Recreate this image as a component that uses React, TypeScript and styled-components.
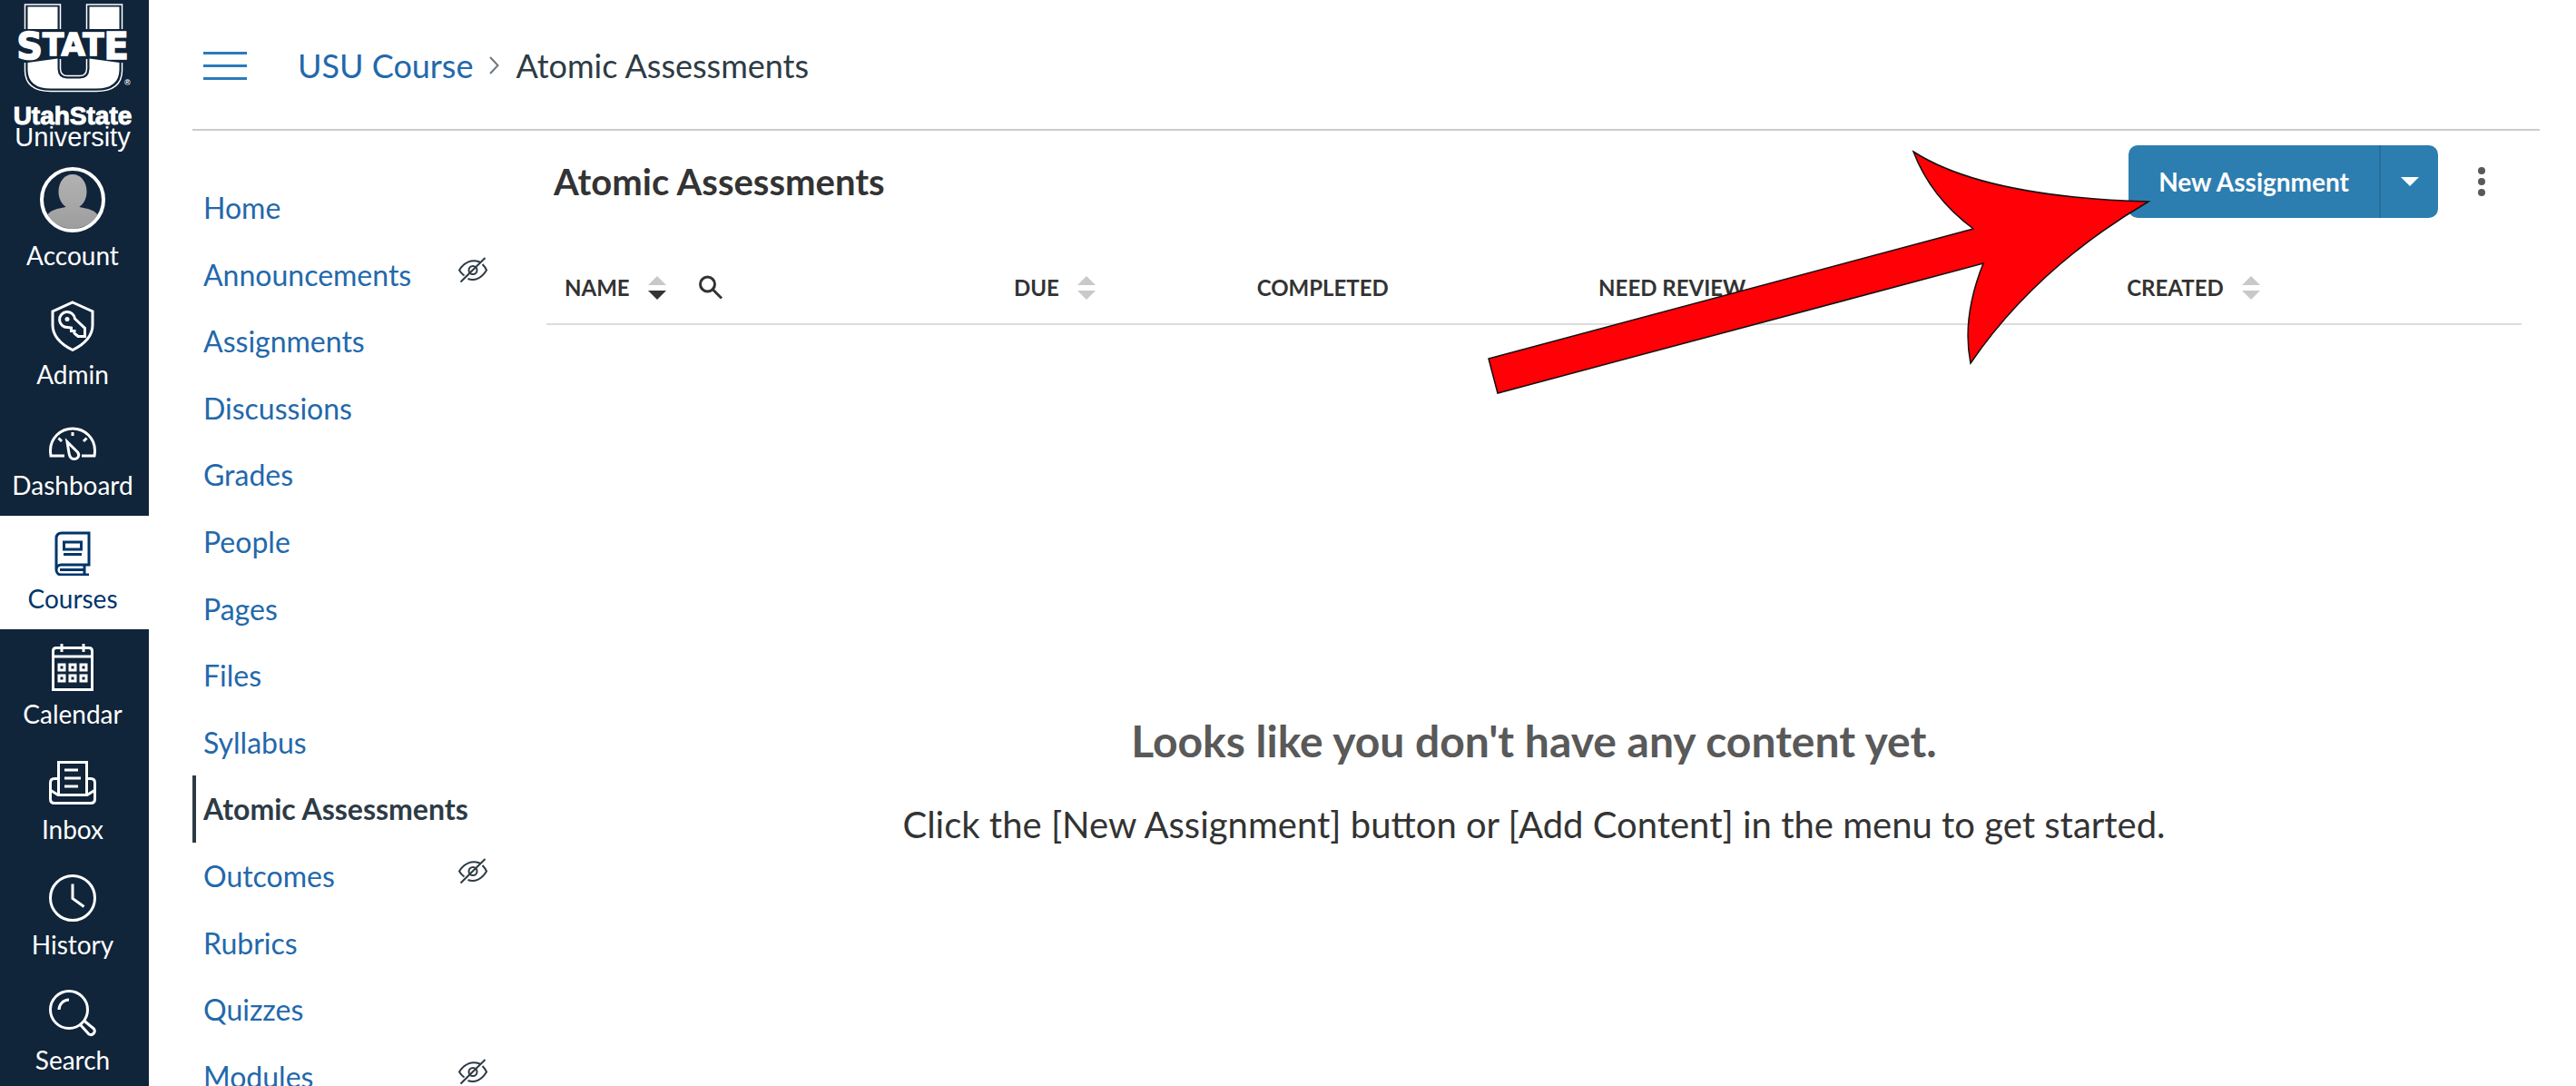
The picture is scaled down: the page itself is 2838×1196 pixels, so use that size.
import React from 'react';
import styled, { createGlobalStyle } from 'styled-components';

const GlobalStyle = createGlobalStyle`
  * { box-sizing: border-box; }
  body {
    margin: 0;
    background: #fff;
    color: #2d3b45;
    font-family: Lato, "Liberation Sans", sans-serif;
  }
  a { text-decoration: none; }
  button { font-family: inherit; }
`;

const Shell = styled.div`
  position: relative;
  display: flex;
  height: 100vh;
  overflow: hidden;
`;

/* ---------- global navigation ---------- */

const Sidebar = styled.nav`
  flex: 0 0 164px;
  display: flex;
  flex-direction: column;
  background: #10243a;
  overflow: hidden;
`;

const LogoLink = styled.a`
  flex: none;
  display: block;

  svg { display: block; }
`;

const GlobalItem = styled.a<{ $active?: boolean }>`
  flex: none;
  display: flex;
  flex-direction: column;
  align-items: center;
  gap: 8px;
  padding: 16px 4px 17px 0;
  font-size: 28px;
  line-height: 34px;
  color: ${(p) => (p.$active ? '#00356b' : '#fff')};
  background: ${(p) => (p.$active ? '#fff' : 'transparent')};

  svg {
    display: block;
    flex: none;
  }
`;

const Glyph = styled.svg`
  fill: none;
  stroke: currentColor;
  stroke-width: 3;
`;

/* ---------- page ---------- */

const Page = styled.div`
  flex: 1;
  min-width: 0;
  display: flex;
  flex-direction: column;
  padding: 0 40px 0 48px;
`;

const TopBar = styled.header`
  display: flex;
  align-items: center;
  gap: 56px;
  height: 144px;
  padding: 2px 0 0 12px;
  border-bottom: 2px solid #c7cdd1;
`;

const MenuButton = styled.button`
  display: grid;
  gap: 11px;
  width: 48px;
  padding: 0;
  border: 0;
  background: none;
  cursor: pointer;
`;

const MenuLine = styled.span`
  height: 3px;
  background: #2b7abc;
`;

const Crumbs = styled.nav`
  display: flex;
  align-items: center;
  gap: 18px;
  font-size: 36px;
  line-height: 44px;
  color: #2d3b45;

  a { color: #2368ab; }
`;

const Columns = styled.div`
  display: flex;
  flex: 1;
  min-height: 0;
`;

const CourseNav = styled.ul`
  flex: 0 0 390px;
  margin: 0;
  padding: 48px 65px 0 0;
  list-style: none;
`;

const CourseLink = styled.a<{ $active?: boolean }>`
  display: flex;
  justify-content: space-between;
  padding: 16px 0 16px 8px;
  border-left: 4px solid ${(p) => (p.$active ? '#2d3b45' : 'transparent')};
  font-size: 32px;
  line-height: 1.3;
  font-weight: ${(p) => (p.$active ? 700 : 400)};
  color: ${(p) => (p.$active ? '#2d3b45' : '#2368ab')};
  white-space: nowrap;

  svg {
    color: #2d3b45;
    stroke-width: 2;
  }
`;

const Main = styled.main`
  flex: 1;
  min-width: 0;
  padding: 16px 20px 0 0;
`;

const TitleRow = styled.div`
  display: flex;
  align-items: center;
  padding: 0 32px 0 8px;
`;

const Title = styled.h1`
  flex: 1;
  margin: 0;
  font-size: 40px;
  line-height: 48px;
  color: #333;
`;

const SplitButton = styled.div`
  display: flex;
  height: 80px;
  border-radius: 10px;
  overflow: hidden;
`;

const PrimaryButton = styled.button`
  padding: 0 33px;
  border: 0;
  background: #2d7eb0;
  color: #fff;
  font-size: 28px;
  line-height: 34px;
  font-weight: 700;
  cursor: pointer;
`;

const CaretButton = styled(PrimaryButton)`
  display: grid;
  place-items: center;
  width: 65px;
  padding: 0;
  border-left: 2px solid #276e9a;
`;

const KebabButton = styled.button`
  display: grid;
  justify-items: center;
  gap: 4px;
  width: 24px;
  margin-left: 36px;
  padding: 0;
  border: 0;
  background: none;
  cursor: pointer;
`;

const Dot = styled.span`
  width: 8px;
  height: 8px;
  border-radius: 50%;
  background: #595959;
`;

const ContentTable = styled.table`
  width: 100%;
  margin-top: 37px;
  border-collapse: collapse;
  table-layout: fixed;
  border-bottom: 2px solid #dcdcdc;
`;

const HeadCell = styled.th<{ $share: number }>`
  width: ${(p) => p.$share}%;
  height: 80px;
  padding: 0 20px;
  text-align: left;
  font-size: 24px;
  line-height: 30px;
  font-weight: 700;
  color: #333;
`;

const HeadContent = styled.div`
  display: flex;
  align-items: center;
  gap: 20px;
`;

const IconButton = styled.button`
  display: flex;
  padding: 0;
  border: 0;
  background: none;
  cursor: pointer;
`;

const SearchToggle = styled(IconButton)`
  margin-left: 16px;
`;

const Empty = styled.section`
  padding-top: 428px;
  text-align: center;
`;

const EmptyTitle = styled.h2`
  margin: 0;
  font-size: 48px;
  line-height: 60px;
  color: #595959;
`;

const EmptyText = styled.p`
  margin: 32px 0 0;
  font-size: 40px;
  line-height: 60px;
  color: #333;
`;

const Arrow = styled.svg`
  position: absolute;
  top: 160px;
  right: 468px;
  pointer-events: none;
`;

/* ---------- drawings ---------- */

const Logo = () => (
  <svg width="164" height="168" viewBox="0 0 164 168" fill="#fff">
    <path d="M27.500 32V5H66.500V32M95.500 32V5H134.500V32" fill="none" stroke="#fff" strokeWidth="1.500" />
    <path d="M30.500 7.500H63.500V32H30.500zM98.500 7.500H131.500V32H98.500z" />
    <path d="M27.500 69V78Q28 100.500 56 100.500H106Q134 100.500 134.500 78V69" fill="none" stroke="#fff" strokeWidth="1.500" />
    <path d="M30.500 69L63.500 64.500V76Q64 86.500 74 86.500H88Q98 86.500 98.500 76V64.500L131.500 69V77Q131 97.500 106 97.500H56Q31 97.500 30.500 77z" />
    <path d="M66.500 65V76Q67 83.500 74 83.500H88Q95 83.500 95.500 76V65" fill="none" stroke="#fff" strokeWidth="1.500" />
    <text x="80" y="65" textAnchor="middle" fontFamily="DejaVu Sans" fontWeight="700" fontSize="34" stroke="#fff" strokeWidth="1.500">
      <tspan fontSize="40">S</tspan>
      <tspan dy="-4">TAT</tspan>
      <tspan dy="4" fontSize="40">E</tspan>
    </text>
    <text x="137" y="94" fontFamily="Liberation Sans" fontWeight="700" fontSize="9">®</text>
    <text x="80" y="137" textAnchor="middle" fontFamily="Liberation Sans" fontWeight="700" fontSize="28" stroke="#fff" strokeWidth="1">UtahState</text>
    <text x="80" y="161" textAnchor="middle" fontFamily="Liberation Sans" fontSize="29">University</text>
  </svg>
);

const Avatar = () => (
  <svg width="72" height="72" viewBox="0 0 72 72">
    <defs>
      <clipPath id="avatar-clip"><circle cx="36" cy="36" r="32" /></clipPath>
      <linearGradient id="avatar-shade" x1="0" y1="0" x2="0" y2="1">
        <stop offset="0" stopColor="#b2b2b2" />
        <stop offset="1" stopColor="#9c9c9c" />
      </linearGradient>
    </defs>
    <path
      clipPath="url(#avatar-clip)"
      fill="url(#avatar-shade)"
      d="M36 8C45 8 51.500 16 51.500 27C51.500 35 48 41 43.500 43.500C45 46 62 44 66 57V72H6V57C10 44 27 46 28.500 43.500C24 41 20.500 35 20.500 27C20.500 16 27 8 36 8z"
    />
    <circle cx="36" cy="36" r="34" fill="none" stroke="#fff" strokeWidth="4" />
  </svg>
);

const AdminIcon = () => (
  <Glyph width="48" height="56" viewBox="0 0 48 56">
    <path d="M24 2L46 12V27C46 40 37 48 24 54.500C11 48 2 40 2 27V12z" />
    <path d="M26.500 20L37.500 30.500V39.500H30L26 36V33.500H22.500V30L18.500 29.500A8.500 8.500 0 1 1 26.500 20z" />
    <circle cx="18" cy="20.500" r="2.500" fill="currentColor" stroke="none" />
  </Glyph>
);

const DashboardIcon = () => (
  <Glyph width="52" height="47" viewBox="0 0 52 47">
    <path d="M17 40H2Q1.500 37 1.500 34A24.500 24 0 0 1 50.500 34Q50.500 37 50 40H36" />
    <path d="M26 14V18M10.500 20.500L14 24M41.500 20.500L38 24" />
    <path d="M20 24.500L31.500 36C34.500 40 31.500 43.500 27.500 43.500C23.500 43.500 22.500 40 22 37z" />
  </Glyph>
);

const CoursesIcon = () => (
  <Glyph width="40" height="50" viewBox="0 0 40 50">
    <path d="M2 43.500V9Q2 3 8 3H38V38H7.500A5.500 5.500 0 0 0 7.500 49H38M33 38V49M6 43.500H33" />
    <path d="M10.500 13H29.500V21H10.500zM10 26.500H30" />
  </Glyph>
);

const CalendarIcon = () => (
  <Glyph width="46" height="52" viewBox="0 0 46 52">
    <path d="M1.500 50.500V8Q1.500 4.500 5 4.500H41Q44.500 4.500 44.500 8V50.500zM1.500 14H44.500M11 0V9M35 0V9" />
    {[26, 38].map((y) =>
      [11, 23, 35].map((x) => <rect key={`${x}-${y}`} x={x - 3} y={y - 3} width="6" height="6" />),
    )}
  </Glyph>
);

const InboxIcon = () => (
  <Glyph width="52" height="52" viewBox="0 0 52 52">
    <path d="M10.500 39V3.500H41.500V39M10 21.500H6Q1.500 21.500 1.500 26V44Q1.500 48.500 6 48.500H46Q50.500 48.500 50.500 44V26Q50.500 21.500 46 21.500H42" />
    <path d="M2 34.500L10 39.500H42L50 34.500M17 12H32M17 21H35M17 30H32" />
  </Glyph>
);

const HistoryIcon = () => (
  <Glyph width="52" height="52" viewBox="0 0 52 52">
    <circle cx="26" cy="26" r="24.500" />
    <path d="M26 10.500V26.500L38.500 35.500" />
  </Glyph>
);

const SearchIcon = () => (
  <Glyph width="52" height="52" viewBox="0 0 52 52">
    <circle cx="22" cy="22" r="20.500" />
    <path d="M11 22A11 11 0 0 1 22 11M34.500 38.500L44 49A4.200 4.200 0 0 0 49.500 43L38.500 34" />
  </Glyph>
);

const HiddenIcon = () => (
  <Glyph width="32" height="32" viewBox="0 -2 32 32" role="img" aria-label="Hidden from students">
    <path d="M6.500 19.500Q3 17 1 13.500C6.500 4.500 15 1 23.500 4.500M26.500 7Q29.500 10 31 13.500C26 22 18 26 10.500 23M2.500 26.500L29.500 0" />
    <circle cx="16" cy="13.500" r="4.500" />
  </Glyph>
);

const SortIcon = ({ descending }: { descending?: boolean }) => (
  <svg width="20" height="26" viewBox="0 0 20 26">
    <path d="M0 10L10 0L20 10z" fill="#c9c9c9" />
    <path d="M0 16L10 26L20 16z" fill={descending ? '#333' : '#c9c9c9'} />
  </svg>
);

/* ---------- data ---------- */

const globalItems = [
  { label: 'Account', Icon: Avatar },
  { label: 'Admin', Icon: AdminIcon },
  { label: 'Dashboard', Icon: DashboardIcon },
  { label: 'Courses', Icon: CoursesIcon, active: true },
  { label: 'Calendar', Icon: CalendarIcon },
  { label: 'Inbox', Icon: InboxIcon },
  { label: 'History', Icon: HistoryIcon },
  { label: 'Search', Icon: SearchIcon },
];

const courseItems = [
  { label: 'Home' },
  { label: 'Announcements', hidden: true },
  { label: 'Assignments' },
  { label: 'Discussions' },
  { label: 'Grades' },
  { label: 'People' },
  { label: 'Pages' },
  { label: 'Files' },
  { label: 'Syllabus' },
  { label: 'Atomic Assessments', active: true },
  { label: 'Outcomes', hidden: true },
  { label: 'Rubrics' },
  { label: 'Quizzes' },
  { label: 'Modules', hidden: true },
];

const columns = [
  { label: 'NAME', share: 22.75, sortable: true, descending: true, searchable: true },
  { label: 'DUE', share: 12.3, sortable: true },
  { label: 'COMPLETED', share: 17.3 },
  { label: 'NEED REVIEW', share: 26.75 },
  { label: 'CREATED', share: 20.9, sortable: true },
];

export default function App() {
  return (
    <>
      <GlobalStyle />
      <Shell>
        <Sidebar aria-label="Global navigation">
          <LogoLink href="#" aria-label="Utah State University">
            <Logo />
          </LogoLink>
          {globalItems.map(({ label, Icon, active }) => (
            <GlobalItem key={label} href="#" $active={active}>
              <Icon />
              {label}
            </GlobalItem>
          ))}
        </Sidebar>

        <Page>
          <TopBar>
            <MenuButton aria-label="Toggle course menu">
              <MenuLine />
              <MenuLine />
              <MenuLine />
            </MenuButton>
            <Crumbs aria-label="Breadcrumb">
              <a href="#">USU Course</a>
              <svg width="11" height="20" viewBox="0 0 11 20" fill="none" stroke="#6b7780" strokeWidth="2">
                <path d="M1 1L9.500 10L1 19" />
              </svg>
              <span>Atomic Assessments</span>
            </Crumbs>
          </TopBar>

          <Columns>
            <CourseNav>
              {courseItems.map((item) => (
                <li key={item.label}>
                  <CourseLink href="#" $active={item.active}>
                    {item.label}
                    {item.hidden && <HiddenIcon />}
                  </CourseLink>
                </li>
              ))}
            </CourseNav>

            <Main>
              <TitleRow>
                <Title>Atomic Assessments</Title>
                <SplitButton>
                  <PrimaryButton>New Assignment</PrimaryButton>
                  <CaretButton aria-label="More assignment types">
                    <svg width="20" height="10" viewBox="0 0 20 10">
                      <path d="M0 0H20L10 10z" fill="#fff" />
                    </svg>
                  </CaretButton>
                </SplitButton>
                <KebabButton aria-label="More options">
                  <Dot />
                  <Dot />
                  <Dot />
                </KebabButton>
              </TitleRow>

              <ContentTable>
                <thead>
                  <tr>
                    {columns.map((col) => (
                      <HeadCell key={col.label} scope="col" $share={col.share}>
                        <HeadContent>
                          {col.label}
                          {col.sortable && (
                            <IconButton aria-label={`Sort by ${col.label}`}>
                              <SortIcon descending={col.descending} />
                            </IconButton>
                          )}
                          {col.searchable && (
                            <SearchToggle aria-label="Search by name">
                              <svg width="26" height="28" viewBox="0 0 26 28" fill="none" stroke="#333" strokeWidth="3">
                                <circle cx="9.500" cy="10" r="8" />
                                <path d="M15 15.500L25 25.500" />
                              </svg>
                            </SearchToggle>
                          )}
                        </HeadContent>
                      </HeadCell>
                    ))}
                  </tr>
                </thead>
              </ContentTable>

              <Empty>
                <EmptyTitle>Looks like you don't have any content yet.</EmptyTitle>
                <EmptyText>Click the [New Assignment] button or [Add Content] in the menu to get started.</EmptyText>
              </Empty>
            </Main>
          </Columns>
        </Page>

        <Arrow width="740" height="280" viewBox="1630 160 740 280" aria-hidden="true">
          <path
            d="M1640 395L2174 252Q2127 217 2108 167Q2186 217 2367 222Q2243 295 2171 400Q2161 350 2185 290L1650 433z"
            fill="#ff0006"
            stroke="#111"
            strokeWidth="1.500"
          />
        </Arrow>
      </Shell>
    </>
  );
}
